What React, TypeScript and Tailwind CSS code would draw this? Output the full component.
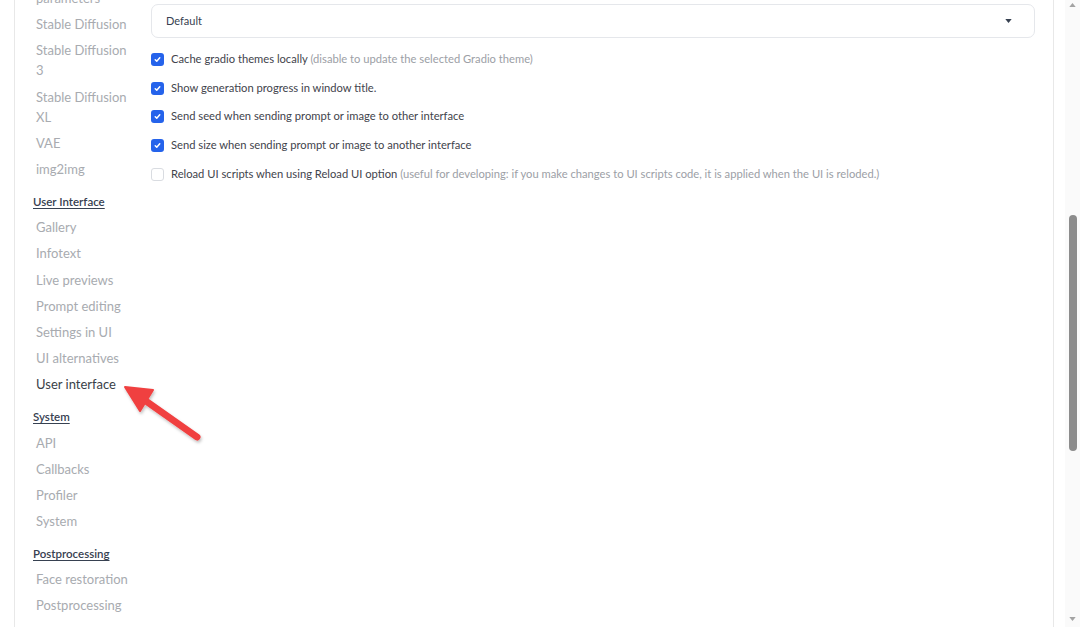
import { Fragment } from "react"

type NavItem = { label: string; lines?: string[]; active?: boolean }
type NavGroup = { title?: string; items: NavItem[] }

const groups: NavGroup[] = [
  {
    items: [
      { label: "Sampler parameters", lines: ["Sampler", "parameters"] },
      { label: "Stable Diffusion" },
      { label: "Stable Diffusion 3", lines: ["Stable Diffusion", "3"] },
      { label: "Stable Diffusion XL", lines: ["Stable Diffusion", "XL"] },
      { label: "VAE" },
      { label: "img2img" },
    ],
  },
  {
    title: "User Interface",
    items: [
      { label: "Gallery" },
      { label: "Infotext" },
      { label: "Live previews" },
      { label: "Prompt editing" },
      { label: "Settings in UI" },
      { label: "UI alternatives" },
      { label: "User interface", active: true },
    ],
  },
  {
    title: "System",
    items: [{ label: "API" }, { label: "Callbacks" }, { label: "Profiler" }, { label: "System" }],
  },
  {
    title: "Postprocessing",
    items: [{ label: "Face restoration" }, { label: "Postprocessing" }],
  },
]

const options = [
  { checked: true, label: "Cache gradio themes locally", note: "(disable to update the selected Gradio theme)" },
  { checked: true, label: "Show generation progress in window title." },
  { checked: true, label: "Send seed when sending prompt or image to other interface" },
  { checked: true, label: "Send size when sending prompt or image to another interface" },
  {
    checked: false,
    label: "Reload UI scripts when using Reload UI option",
    note: "(useful for developing: if you make changes to UI scripts code, it is applied when the UI is reloded.)",
  },
]

function Checkbox({ checked }: { checked: boolean }) {
  if (!checked) {
    return <span className="block h-[13px] w-[13px] shrink-0 rounded-[3px] border border-[#d9dce1] bg-white" />
  }
  return (
    <span className="flex h-[13px] w-[13px] shrink-0 items-center justify-center rounded-[3px] bg-[#2563eb]">
      <svg viewBox="0 0 12 12" className="h-[9px] w-[9px]" fill="none" stroke="white" strokeWidth="2" strokeLinecap="round" strokeLinejoin="round">
        <path d="M3 6.3 5 8.2 9 3.8" />
      </svg>
    </span>
  )
}

function Sidebar() {
  return (
    <nav className="w-[136px] shrink-0 pl-[18px] mt-[-35px] font-['Lato',sans-serif]">
      {groups.map((g, gi) => (
        <div key={gi}>
          {g.title && (
            <div className="mt-[12px] mb-[4px] text-[11.5px] leading-[16px] font-semibold text-[#374151] underline underline-offset-2">
              {g.title}
            </div>
          )}
          {g.items.map((it) => (
            <div
              key={it.label}
              className={`whitespace-nowrap py-[3.1px] pl-[3px] text-[13px] leading-[20px] ${it.active ? "text-[#3a3f48]" : "text-[#a8abb0]"}`}
            >
              {(it.lines ?? [it.label]).map((l, i) => (
                <Fragment key={i}>
                  {i > 0 && <br />}
                  {l}
                </Fragment>
              ))}
            </div>
          ))}
        </div>
      ))}
    </nav>
  )
}

function Main() {
  return (
    <main className="flex-1 pr-[18px] font-['Lato',sans-serif]">
      <div className="mt-[-14px] h-[16px] whitespace-nowrap text-[11px] leading-[16px] text-[#9a9ea5] pl-[70px]">
        Gradio theme (requires restart) (you can also manually enter any of themes from the{" "}
        <span className="underline text-[#555]">gallery</span>.)
      </div>
      <div className="mt-[2px] flex h-[34px] items-center justify-between rounded-[7px] border border-[#e5e7eb] bg-white pl-[14px] pr-[22px]">
        <span className="text-[11px] text-[#374151]">Default</span>
        <svg viewBox="0 0 8 5" className="h-[4px] w-[7px]" fill="#374151">
          <path d="M0 0h8L4 5z" />
        </svg>
      </div>
      <div className="mt-[7px] flex flex-col">
        {options.map((o) => (
          <div key={o.label} className="flex h-[28.75px] items-center gap-[7px] whitespace-nowrap text-[11.2px]">
            <Checkbox checked={o.checked} />
            <span className="text-[#3f444c]">
              {o.label}
              {o.note && <span className="text-[#9ca0a6]"> {o.note}</span>}
            </span>
          </div>
        ))}
      </div>
    </main>
  )
}

function Scrollbar() {
  return (
    <div className="flex w-[15px] shrink-0 flex-col items-center bg-[#fafafa]">
      <svg viewBox="0 0 8 5" className="mt-[3px] h-[4px] w-[7px]" fill="#a3a3a3">
        <path d="M0 5h8L4 0z" />
      </svg>
      <div className="h-[208px]" />
      <div className="h-[236px] w-[8px] rounded-full bg-[#8c8c8c]" />
      <div className="flex-1" />
      <svg viewBox="0 0 8 5" className="mb-[6px] h-[4px] w-[7px]" fill="#a3a3a3">
        <path d="M0 0h8L4 5z" />
      </svg>
    </div>
  )
}

function Pointer() {
  return (
    <svg className="pointer-events-none absolute left-0 top-0" width="1080" height="627">
      <defs>
        <filter id="sh" x="-20%" y="-20%" width="140%" height="140%">
          <feDropShadow dx="1" dy="2" stdDeviation="1.6" floodColor="#000" floodOpacity="0.25" />
        </filter>
      </defs>
      <g filter="url(#sh)" fill="#f04040" stroke="#f04040">
        <line x1="197" y1="437" x2="143" y2="399" strokeWidth="7" strokeLinecap="round" />
        <polygon points="125,387 153,390 140,411" strokeWidth="2" strokeLinejoin="round" />
      </g>
    </svg>
  )
}

export default function App() {
  return (
    <div className="relative flex h-[627px] w-[1080px] overflow-hidden bg-white">
      <div className="w-[14px] shrink-0" />
      <div className="flex flex-1 border-l border-r border-[#e8e8e8]">
        <Sidebar />
        <Main />
      </div>
      <div className="w-[11px] shrink-0" />
      <Scrollbar />
      <Pointer />
    </div>
  )
}
